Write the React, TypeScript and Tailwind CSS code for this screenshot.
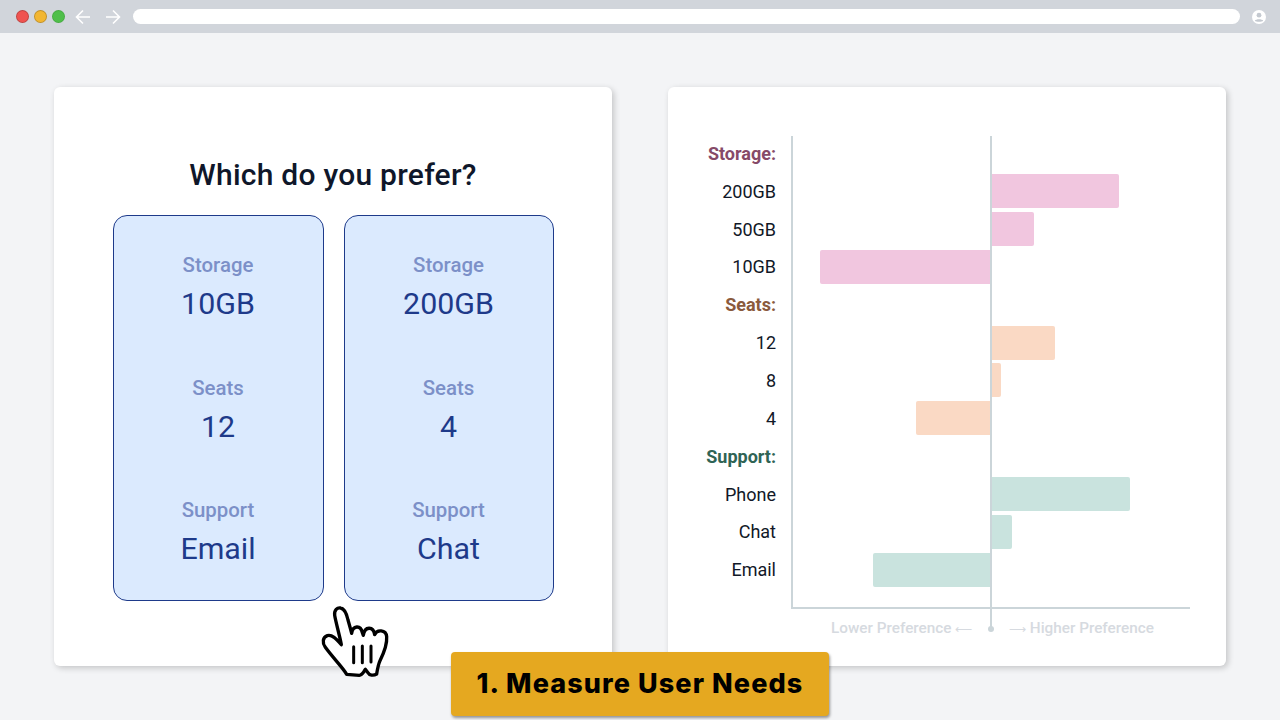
const options = [
  [["Storage", "10GB"], ["Seats", "12"], ["Support", "Email"]],
  [["Storage", "200GB"], ["Seats", "4"], ["Support", "Chat"]],
];

type Row = { label: string; head?: boolean; color: string; bar?: string; left?: number; right?: number };

const rows: Row[] = [
  { label: "Storage:", head: true, color: "text-[#864a68]" },
  { label: "200GB", color: "text-[#111827]", bar: "bg-[#f1c6df]", right: 128 },
  { label: "50GB", color: "text-[#111827]", bar: "bg-[#f1c6df]", right: 43 },
  { label: "10GB", color: "text-[#111827]", bar: "bg-[#f1c6df]", left: 171 },
  { label: "Seats:", head: true, color: "text-[#8a5a3c]" },
  { label: "12", color: "text-[#111827]", bar: "bg-[#fad9c4]", right: 64 },
  { label: "8", color: "text-[#111827]", bar: "bg-[#fad9c4]", right: 10 },
  { label: "4", color: "text-[#111827]", bar: "bg-[#fad9c4]", left: 75 },
  { label: "Support:", head: true, color: "text-[#2f6455]" },
  { label: "Phone", color: "text-[#111827]", bar: "bg-[#c9e3de]", right: 139 },
  { label: "Chat", color: "text-[#111827]", bar: "bg-[#c9e3de]", right: 21 },
  { label: "Email", color: "text-[#111827]", bar: "bg-[#c9e3de]", left: 118 },
];

function Option({ groups, width }: { groups: string[][]; width: string }) {
  return (
    <div className={`${width} h-[386px] rounded-[14px] border border-[#1e3a8a] bg-[#dbeafe] flex flex-col gap-[51.7px] pt-[35px] pr-[1px] items-center`}>
      {groups.map(([k, v]) => (
        <div key={k} className="flex flex-col items-center gap-[7px]">
          <div className="text-[20.4px] leading-[28px] font-medium text-[#7c90c8]">{k}</div>
          <div className="text-[30.4px] leading-[36px] text-[#1e3a8a]">{v}</div>
        </div>
      ))}
    </div>
  );
}

function Hand() {
  return (
    <svg className="absolute left-[300px] top-[590px]" width="120" height="100" viewBox="0 0 360 300" fill="none">
      <path
        d="M140 253 C128 232 100 205 76 172 C66 158 68 142 82 137 C96 133 108 146 124 164 C118 132 108 100 104 76 C102 60 112 52 122 54 C134 56 140 72 144 90 C148 104 152 118 155 130 C158 106 182 104 187 128 L190 136 C194 108 220 108 224 134 C230 118 258 118 260 140 C262 165 250 192 240 212 C234 226 232 240 230 252 C220 258 208 256 204 248 L196 238 C190 248 186 256 178 256 Z"
        fill="#fff"
        stroke="#000"
        strokeWidth="10"
        strokeLinejoin="round"
      />
      <path d="M161 170 V218 M187 168 V218 M213 168 V216" stroke="#000" strokeWidth="9" strokeLinecap="round" />
    </svg>
  );
}

export default function App() {
  return (
    <div className="relative w-[1280px] h-[720px] overflow-hidden bg-[#f3f4f6] font-['Roboto',sans-serif]">
      <header className="h-[33px] bg-[#d1d5db] flex items-center pl-[16px] pr-[14px]">
        <div className="flex gap-[5px]">
          <span className="w-[13px] h-[13px] rounded-full border border-black/20 bg-[#ef5350]" />
          <span className="w-[13px] h-[13px] rounded-full border border-black/20 bg-[#f2b632]" />
          <span className="w-[13px] h-[13px] rounded-full border border-black/10 bg-[#4fbf4a]" />
        </div>
        <svg className="ml-[10px]" width="16" height="16" viewBox="0 0 16 16" fill="none" stroke="#fff" strokeWidth="1.6">
          <path d="M15 8H1.5M8 1.5 1.5 8 8 14.5" />
        </svg>
        <svg className="ml-[14px]" width="16" height="16" viewBox="0 0 16 16" fill="none" stroke="#fff" strokeWidth="1.6">
          <path d="M1 8h13.5M8 1.5 14.5 8 8 14.5" />
        </svg>
        <div className="ml-[12px] flex-1 h-[15px] rounded-full bg-white" />
        <svg className="ml-[12px]" width="14" height="14" viewBox="0 0 14 14">
          <circle cx="7" cy="7" r="7" fill="#fff" />
          <circle cx="7" cy="5.2" r="2.4" fill="#c4c9d0" />
          <path d="M2.8 10.8c1-2 7.4-2 8.4 0-1.2 1.4-7.2 1.4-8.4 0Z" fill="#c4c9d0" />
        </svg>
      </header>

      <main className="flex gap-[56px] pl-[54px] pt-[54px]">
        <section className="w-[558px] h-[579px] bg-white rounded-[6px] shadow-[2px_2px_6px_rgba(0,0,0,0.2)] flex flex-col items-center pt-[68px]">
          <h1 className="text-[30px] leading-[40px] font-medium text-[#0f172a] tracking-[0.25px]">Which do you prefer?</h1>
          <div className="flex gap-[20px] mt-[20px] ml-[1px]">
            <Option groups={options[0]} width="w-[211px]" />
            <Option groups={options[1]} width="w-[210px]" />
          </div>
        </section>

        <section className="w-[558px] h-[579px] bg-white rounded-[6px] shadow-[2px_2px_6px_rgba(0,0,0,0.2)] pt-[47.5px]">
          <div className="flex">
            <div className="w-[108px] flex flex-col">
              {rows.map((r) => (
                <div key={r.label} className={`h-[37.85px] flex items-center justify-end text-[18px] ${r.head ? "font-bold text-[17px]" : ""} ${r.color}`}>
                  {r.label}
                </div>
              ))}
            </div>
            <div className="relative ml-[15px] mt-[1.5px] w-[399px] h-[473px] border-l-2 border-b-2 border-[#cbd5d9] flex flex-col">
              <div className="absolute left-[197px] top-0 w-[2px] h-[492px] bg-[#cbd5d9] z-10" />
              <div className="mt-[-1.5px] flex flex-col">
                {rows.map((r) => (
                  <div key={r.label} className="h-[37.85px] flex items-center">
                    <div className="w-[198px] flex justify-end">
                      {r.left ? <div className={`h-[34px] rounded-l-[2px] ${r.bar}`} style={{ width: r.left }} /> : null}
                    </div>
                    <div>
                      {r.right ? <div className={`h-[34px] rounded-r-[2px] ${r.bar}`} style={{ width: r.right }} /> : null}
                    </div>
                  </div>
                ))}
              </div>
            </div>
          </div>
          <div className="flex items-center mt-[9px] ml-[163px] text-[15.3px] leading-[20px] font-medium text-[#d6dae0]">
            <span className="w-[140px] text-right whitespace-nowrap">
              Lower Preference <span className="text-[12px]">⟵</span>
            </span>
            <span className="w-[40px] flex justify-center">
              <span className="w-[6px] h-[6px] rounded-full bg-[#cbd5d9]" />
            </span>
            <span className="whitespace-nowrap ml-[-2px]">
              <span className="text-[12px]">⟶</span> Higher Preference
            </span>
          </div>
        </section>
      </main>

      <Hand />

      <div className="absolute left-[451px] top-[652px] w-[378px] h-[64px] rounded-[4px] bg-[#e5a820] shadow-[1px_2px_3px_rgba(0,0,0,0.4)] flex items-center justify-center font-['Inter',sans-serif] font-extrabold text-[27px] tracking-[1.1px] text-black">
        1. Measure User Needs
      </div>
    </div>
  );
}
